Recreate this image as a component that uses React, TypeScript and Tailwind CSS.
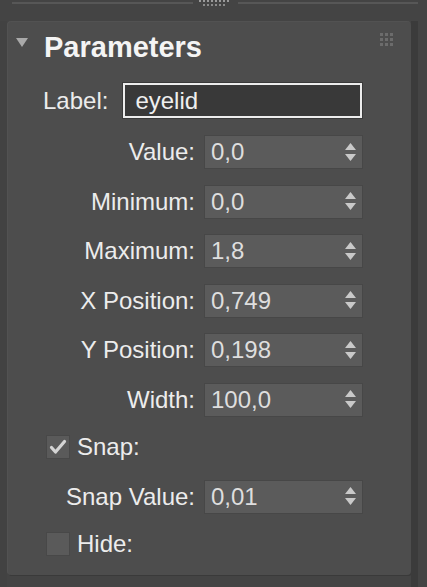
import React from "react";

const font = { fontFamily: '"Liberation Sans", Arial, sans-serif' };

function Spinner() {
  return (
    <svg width="11" height="19" viewBox="0 0 11 19" className="shrink-0">
      <polygon points="5.5,0 11,7 0,7" fill="#c9c9c9" />
      <polygon points="0,11 11,11 5.5,18" fill="#c9c9c9" />
    </svg>
  );
}

function Field({ value }: { value: string }) {
  return (
    <div className="w-[159px] h-[34px] bg-[#5b5b5b] border border-[#474747] flex items-center justify-between pl-[6px] pr-[6px]">
      <span className="text-[24px] leading-none text-[#dedede]">{value}</span>
      <Spinner />
    </div>
  );
}

function Row({ label, value }: { label: string; value: string }) {
  return (
    <div className="flex items-center h-[34px]">
      <div className="w-[187px] text-right text-[24px] leading-none text-[#ececec] whitespace-nowrap">{label}</div>
      <div className="ml-[9px]">
        <Field value={value} />
      </div>
    </div>
  );
}

function Checkbox({ checked }: { checked: boolean }) {
  return (
    <div className="w-[24px] h-[24px] bg-[#5a5a5a] border border-[#484848] flex items-center justify-center">
      {checked && (
        <svg width="18" height="16" viewBox="0 0 18 16">
          <path d="M2.5 8.5 L6.5 13 L15.5 2.5" stroke="#d4d4d4" strokeWidth="3.2" fill="none" strokeLinecap="round" strokeLinejoin="round" />
        </svg>
      )}
    </div>
  );
}

export default function App() {
  return (
    <div className="w-[427px] h-[587px] bg-[#444444] overflow-hidden flex flex-col" style={font}>
      {/* top strip */}
      <div className="h-[21px] flex items-start pl-[12px] pr-[9px] shrink-0">
        <div className="flex-1 h-[2px] mt-[2px] bg-[#575757]" />
        <div className="ml-[6px] mr-[9px] flex flex-col items-center gap-[2px]">
          <div className="flex gap-[2px]">
            {[0, 1, 2, 3, 4, 5, 6, 7].map((i) => (
              <div key={i} className="w-[2px] h-[2px] bg-[#9a9a9a]" />
            ))}
          </div>
          <div className="flex gap-[2px]">
            {[0, 1, 2, 3, 4, 5].map((i) => (
              <div key={i} className="w-[2px] h-[2px] bg-[#8a8a8a]" />
            ))}
          </div>
        </div>
        <div className="flex-1 h-[2px] mt-[2px] bg-[#575757]" />
      </div>

      <div className="flex flex-1">
        <div className="w-[7px] shrink-0 bg-[#424242]" />
        {/* panel */}
        <div className="w-[404px] h-[554px] shrink-0 bg-[#4d4d4d] rounded-[4px] border-t border-l border-[#525252] shadow-[1px_1px_0_#3a3a3a] flex flex-col">
          {/* header */}
          <div className="h-[61px] flex items-start pt-[10px] relative">
            <svg width="12" height="9" viewBox="0 0 12 9" className="ml-[8px] mt-[6px]">
              <polygon points="0,0 12,0 6,9" fill="#a9a9a9" />
            </svg>
            <span className="ml-[16px] text-[29px] leading-none font-bold text-[#f4f4f4] mt-[1px]">Parameters</span>
            <div className="absolute right-[18px] top-[11px] grid grid-cols-3 gap-[2px]">
              {[0, 1, 2, 3, 4, 5, 6, 7, 8].map((i) => (
                <div key={i} className="w-[3px] h-[3px] bg-[#6c6c6c]" />
              ))}
            </div>
          </div>

          {/* label row */}
          <div className="flex items-center h-[35px]">
            <div className="ml-[35px] text-[24px] leading-none text-[#ececec]">Label:</div>
            <div className="ml-[15px] w-[239px] h-[35px] border-[2px] border-[#ededed] outline outline-1 outline-[#3a3a3a] bg-[#393939] flex items-center pl-[10px]">
              <span className="text-[24px] leading-none text-[#efefef]">eyelid</span>
            </div>
          </div>

          {/* numeric rows */}
          <div className="mt-[17px] flex flex-col gap-[15.5px]">
            <Row label="Value:" value="0,0" />
            <Row label="Minimum:" value="0,0" />
            <Row label="Maximum:" value="1,8" />
            <Row label="X Position:" value="0,749" />
            <Row label="Y Position:" value="0,198" />
            <Row label="Width:" value="100,0" />
          </div>

          {/* snap */}
          <div className="mt-[18px] flex items-center ml-[38px] h-[24px]">
            <Checkbox checked />
            <span className="ml-[7px] text-[24px] leading-none text-[#ececec]">Snap:</span>
          </div>
          <div className="mt-[21px]">
            <Row label="Snap Value:" value="0,01" />
          </div>
          <div className="mt-[18px] flex items-center ml-[38px] h-[24px]">
            <Checkbox checked={false} />
            <span className="ml-[7px] text-[24px] leading-none text-[#ececec]">Hide:</span>
          </div>
        </div>
        <div className="w-[7px] shrink-0 bg-[#3b3b3b]" />
        <div className="flex-1 bg-[#444444]" />
      </div>
    </div>
  );
}
